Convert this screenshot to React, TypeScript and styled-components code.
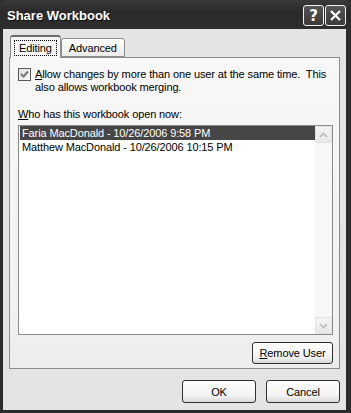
import styled, { createGlobalStyle } from "styled-components";

const Global = createGlobalStyle`
	html, body {
		margin: 0;
		padding: 0;
		background: #ffffff;
	}
	body {
		font-family: "Liberation Sans", Arial, sans-serif;
		font-size: 11px;
		letter-spacing: -0.12px;
		color: #000;
	}
`;

const users = [
	"Faria MacDonald - 10/26/2006 9:58 PM",
	"Matthew MacDonald - 10/26/2006 10:15 PM",
];

export default function App() {
	return (
		<>
			<Global />
			<Window>
				<TitleBar>
					<Title>Share Workbook</Title>
					<Caption>
						<CapButton>?</CapButton>
						<CapButton>
							<svg width="13" height="13" viewBox="0 0 13 13">
								<path d="M2 2 L11 11 M11 2 L2 11" stroke="#fff" strokeWidth="2.2" />
							</svg>
						</CapButton>
					</Caption>
				</TitleBar>
				<Body>
					<Tabs>
						<Tab $active>
							<Focus>Editing</Focus>
						</Tab>
						<Tab>Advanced</Tab>
					</Tabs>
					<Panel>
						<CheckRow>
							<Check>
								<svg width="11" height="11" viewBox="0 0 11 11">
									<path d="M2 5 L4.5 7.5 L9 2.5" stroke="#777" strokeWidth="2" fill="none" />
								</svg>
							</Check>
							<CheckText>
								<u>A</u>llow changes by more than one user at the same time.{"\u00a0 "}This
								<br />
								also allows workbook merging.
							</CheckText>
						</CheckRow>
						<Label>
							<u>W</u>ho has this workbook open now:
						</Label>
						<ListBox>
							<Rows>
								{users.map((u, i) => (
									<Row key={u} $selected={i === 0}>
										{u}
									</Row>
								))}
							</Rows>
							<ScrollBar>
								<ArrowButton>
									<svg width="9" height="6" viewBox="0 0 9 6">
										<path d="M1 5 L4.5 1.5 L8 5" stroke="#bbb" strokeWidth="1.6" fill="none" />
									</svg>
								</ArrowButton>
								<ArrowButton>
									<svg width="9" height="6" viewBox="0 0 9 6">
										<path d="M1 1 L4.5 4.5 L8 1" stroke="#bbb" strokeWidth="1.6" fill="none" />
									</svg>
								</ArrowButton>
							</ScrollBar>
						</ListBox>
						<PanelFooter>
							<Button $width={81} $height={22}>
								<u>R</u>emove User
							</Button>
						</PanelFooter>
					</Panel>
					<Footer>
						<Button $width={74} $height={23}>OK</Button>
						<Button $width={74} $height={23}>Cancel</Button>
					</Footer>
				</Body>
			</Window>
		</>
	);
}

const Window = styled.div`
	width: 351px;
	height: 413px;
	box-sizing: border-box;
	background: #2c2c2c;
	padding: 0 5px 3px 3px;
	display: flex;
	flex-direction: column;
`;

const TitleBar = styled.div`
	height: 29px;
	margin: 0 -5px 0 -3px;
	padding: 0 5px 0 7px;
	display: flex;
	align-items: center;
	justify-content: space-between;
	background: linear-gradient(#3a3a3a, #2a2a2a 40%, #2e2e2e);
	border-radius: 6px 6px 0 0;
`;

const Title = styled.span`
	font-family: "Liberation Sans", Arial, sans-serif;
	font-weight: bold;
	font-size: 13px;
	letter-spacing: 0;
	color: #fff;
	text-shadow: 1px 1px 0 #111;
	margin-top: 1px;
`;

const Caption = styled.div`
	display: flex;
	gap: 1px;
	margin-top: 2px;
`;

const CapButton = styled.div`
	width: 21px;
	height: 21px;
	box-sizing: border-box;
	border: 1px solid #f2f2f2;
	border-radius: 3px;
	background: linear-gradient(#555, #3a3a3a);
	color: #fff;
	font-family: "DejaVu Sans", sans-serif;
	font-weight: bold;
	font-size: 15px;
	display: flex;
	align-items: center;
	justify-content: center;
`;

const Body = styled.div`
	flex: 1;
	background: #e4e4e4;
	padding: 6px 6px 0 6px;
	display: flex;
	flex-direction: column;
`;

const Tabs = styled.div`
	height: 22px;
	display: flex;
	align-items: flex-end;
	padding-left: 1px;
	position: relative;
	z-index: 1;
`;

const Tab = styled.div<{ $active?: boolean }>`
	box-sizing: border-box;
	height: ${(p) => (p.$active ? "23px" : "19px")};
	margin-bottom: ${(p) => (p.$active ? "-1px" : "0")};
	padding: 0 ${(p) => (p.$active ? "3px" : "7px")};
	border: 1px solid #8c8c8c;
	border-bottom: ${(p) => (p.$active ? "none" : "1px solid #8c8c8c")};
	border-top: ${(p) => (p.$active ? "2px solid #6a6a6a" : "1px solid #8c8c8c")};
	border-radius: 3px 3px 0 0;
	background: ${(p) => (p.$active ? "#f6f6f6" : "linear-gradient(#ffffff, #ececec)")};
	display: flex;
	align-items: center;
	font-size: 11px;
`;

const Focus = styled.span`
	border: 1px dotted #000;
	padding: 1px 4px;
`;

const Panel = styled.div`
	height: 312px;
	box-sizing: border-box;
	border: 1px solid #8c8c8c;
	background: linear-gradient(#f7f7f7, #f2f2f2 80%, #ececec);
	padding: 10px 6px 0 8px;
	display: flex;
	flex-direction: column;
`;

const CheckRow = styled.div`
	display: flex;
	gap: 4px;
`;

const Check = styled.div`
	width: 13px;
	height: 13px;
	flex-shrink: 0;
	box-sizing: border-box;
	border: 1px solid #5a5a5a;
	background: linear-gradient(135deg, #e0e0e0, #fafafa);
	display: flex;
	align-items: center;
	justify-content: center;
`;

const CheckText = styled.div`
	line-height: 13px;
	white-space: nowrap;
`;

const Label = styled.div`
	margin-top: 14px;
	line-height: 13px;
`;

const ListBox = styled.div`
	margin-top: 4px;
	width: 315px;
	height: 210px;
	box-sizing: border-box;
	border: 1px solid #8a8a8a;
	background: #fff;
	padding: 0 0 0 1px;
	display: flex;
`;

const Rows = styled.div`
	flex: 1;
`;

const Row = styled.div<{ $selected?: boolean }>`
	height: 14px;
	line-height: 14px;
	padding-left: 2px;
	background: ${(p) => (p.$selected ? "#464646" : "transparent")};
	color: ${(p) => (p.$selected ? "#fff" : "#000")};
`;

const ScrollBar = styled.div`
	width: 17px;
	background: #f7f7f7;
	display: flex;
	flex-direction: column;
	justify-content: space-between;
`;

const ArrowButton = styled.div`
	width: 17px;
	height: 17px;
	box-sizing: border-box;
	border: 1px solid #e2e2e2;
	border-radius: 2px;
	background: linear-gradient(#f4f4f4, #e8e8e8);
	display: flex;
	align-items: center;
	justify-content: center;
`;

const PanelFooter = styled.div`
	margin-top: 7px;
	width: 315px;
	display: flex;
	justify-content: flex-end;
`;

const Button = styled.div<{ $width: number; $height: number }>`
	width: ${(p) => p.$width}px;
	height: ${(p) => p.$height}px;
	box-sizing: border-box;
	border: 1px solid #2f2f2f;
	border-radius: 3px;
	background: linear-gradient(#ffffff, #f2f2f2 70%, #d9d9d9);
	display: flex;
	align-items: center;
	justify-content: center;
	font-size: 11px;
`;

const Footer = styled.div`
	margin-top: 11px;
	display: flex;
	justify-content: flex-end;
	gap: 10px;
`;
